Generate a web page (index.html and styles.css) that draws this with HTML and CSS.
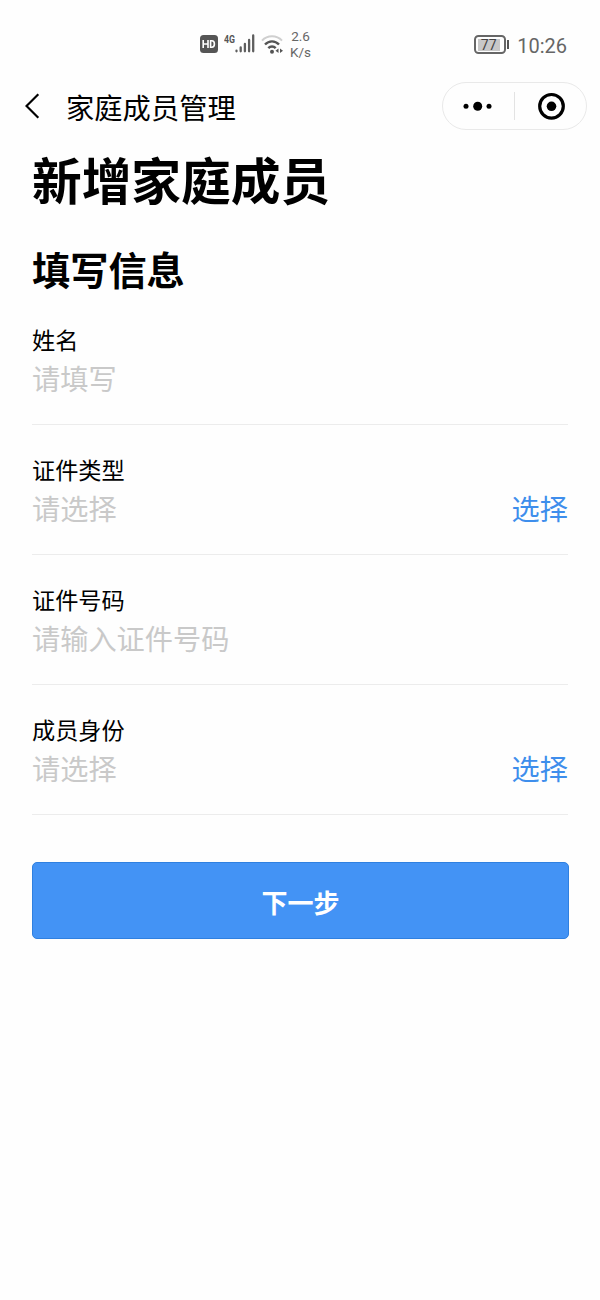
FILE: index.html
```html
<!DOCTYPE html>
<html lang="zh-CN">
<head>
<meta charset="utf-8">
<title>家庭成员管理</title>
<link rel="stylesheet" href="styles.css">
</head>
<body>
<header class="status">
  <div class="status-left">
    <svg class="hd" width="18" height="18" viewBox="0 0 18 18"><rect width="18" height="18" rx="3.5" fill="#555"/><path d="M3.2 5v8M8 5v8M3.2 9H8M10.6 5.8v6.4h1.2c1.8 0 2.6-1.2 2.6-3.2s-.8-3.2-2.6-3.2z" fill="none" stroke="#fff" stroke-width="1.6"/></svg>
    <span class="net">4G</span>
    <svg class="signal" width="20" height="19" viewBox="0 0 20 19" stroke="#5e5e5e" stroke-width="2.3" stroke-linecap="round"><path d="M1.5 16.7v.6M5.7 13.5v3.800M9.900 10v7.300M14.100 6v11.300M18.200 1.500v15.800"/></svg>
    <svg class="wifi" width="23" height="20" viewBox="0 0 23 20" fill="none" stroke-width="2"><path d="M1 5.6C6.500-.1 15.500-.1 21 5.600" stroke="#cfcfcf"/><path d="M4 9.500c4-4.200 10-4.200 14 0M7.300 13.200c2.200-2.300 5.200-2.300 7.400 0" stroke="#555" stroke-width="2.400"/><circle cx="11" cy="16.800" r="2" fill="#555"/><path d="M17.500 13.500v4.500l-3-2.250zM19 13.500v4.500l3-2.250z" fill="#555"/></svg>
    <div class="speed"><span>2.6</span><span>K/s</span></div>
  </div>
  <div class="status-right">
    <div class="battery"><span class="level">77</span></div>
    <i class="cap"></i>
    <span class="time">10:26</span>
  </div>
</header>
<nav class="nav">
  <svg class="back" width="15" height="26" viewBox="0 0 15 26"><path d="M13.300 1.300 1.500 13l11.800 11.700" fill="none" stroke="#000" stroke-width="2.200"/></svg>
  <span class="nav-title">家庭成员管理</span>
  <div class="capsule">
    <svg width="71" height="46" viewBox="0 0 71 46"><circle cx="23" cy="23.300" r="2.500"/><circle cx="34.700" cy="23.300" r="4.500"/><circle cx="46" cy="23.300" r="2.500"/></svg>
    <i class="divider"></i>
    <svg width="71" height="46" viewBox="0 0 71 46"><circle cx="36.500" cy="23.300" r="11.800" fill="none" stroke="#000" stroke-width="3.200"/><circle cx="36.500" cy="23.300" r="4.800"/></svg>
  </div>
</nav>
<main class="page">
  <h1 class="title">新增家庭成员</h1>
  <h2 class="subtitle">填写信息</h2>
  <section class="field"><div class="label">姓名</div><div class="row"><span class="hint">请填写</span></div></section>
  <section class="field"><div class="label">证件类型</div><div class="row"><span class="hint">请选择</span><a class="pick">选择</a></div></section>
  <section class="field"><div class="label">证件号码</div><div class="row"><span class="hint">请输入证件号码</span></div></section>
  <section class="field"><div class="label">成员身份</div><div class="row"><span class="hint">请选择</span><a class="pick">选择</a></div></section>
  <button class="next">下一步</button>
</main>
</body>
</html>
```

FILE: styles.css
```css
* { box-sizing: border-box; }
body {
  margin: 0;
  background: #fefefe;
  color: #000;
  font-family: "Noto Sans CJK SC", sans-serif;
}
.status {
  height: 76px;
  padding: 28px 33px 0 200px;
  display: flex;
  justify-content: space-between;
  align-items: flex-start;
  font-family: Roboto, sans-serif;
  color: #666;
}
.status-left { display: flex; align-items: flex-start; }
.hd { margin-top: 7px; }
.net {
  width: 11px;
  margin: 5px 0 0 6px;
  font: bold 11.500px/13px Roboto, sans-serif;
  transform: scaleX(.76);
  transform-origin: left;
  color: #555;
}
.signal { margin: 6px 0 0 0; }
.wifi { margin: 7px 0 0 6px; }
.speed {
  display: flex;
  flex-direction: column;
  align-items: center;
  margin: 1px 0 0 6px;
  font-size: 13.5px;
  line-height: 15.500px;
}
.status-right { display: flex; align-items: center; height: 33px; }
.battery {
  width: 32px;
  height: 19px;
  border: 2px solid #666;
  border-radius: 4.500px;
  padding: 1.500px;
  display: flex;
}
.level {
  width: 22px;
  height: 12px;
  background: #c8c8c8;
  color: #444;
  font-size: 14px;
  line-height: 13px;
  text-align: center;
}
.cap { width: 2px; height: 9px; margin-left: 1px; background: #555; }
.time {
  margin: 2px 0 0 8px;
  font: 20px/24px Roboto, sans-serif;
}
.nav {
  height: 60px;
  padding: 0 13px 0 25px;
  display: flex;
  align-items: center;
}
.back { flex: none; }
.nav-title {
  margin: 1px 0 0 26px;
  font-size: 28.300px;
  line-height: 40px;
}
.capsule {
  width: 145px;
  height: 48px;
  margin-left: auto;
  border: 1.500px solid #e9e9e9;
  border-radius: 24px;
  display: flex;
  align-items: center;
}
.divider { flex: none; width: 1px; height: 28px; background: #e3e3e3; }
.page { padding: 0 32px; }
.title {
  margin: 0;
  padding-top: 7px;
  height: 102px;
  font-size: 49.700px;
  line-height: 70px;
  font-weight: 700;
}
.subtitle {
  margin: 0;
  height: 57px;
  font-size: 38.200px;
  line-height: 62px;
  font-weight: 700;
}
.field {
  height: 130px;
  padding-top: 28px;
  border-bottom: 1px solid #ececec;
}
.label { font-size: 23.200px; line-height: 32px; }
.row {
  display: flex;
  justify-content: space-between;
  font-size: 28.200px;
  line-height: 46px;
}
.hint { color: #c9c9c9; }
.pick { color: #3e8eec; }
.next {
  display: block;
  width: 537px;
  height: 77px;
  margin: 47px 0 0;
  padding: 2px 0 0;
  border: 1px solid #2f80e0;
  border-radius: 5px;
  background: #4393f5;
  color: #fff;
  font: 700 26px/40px "Noto Sans CJK SC", sans-serif;
}
```
